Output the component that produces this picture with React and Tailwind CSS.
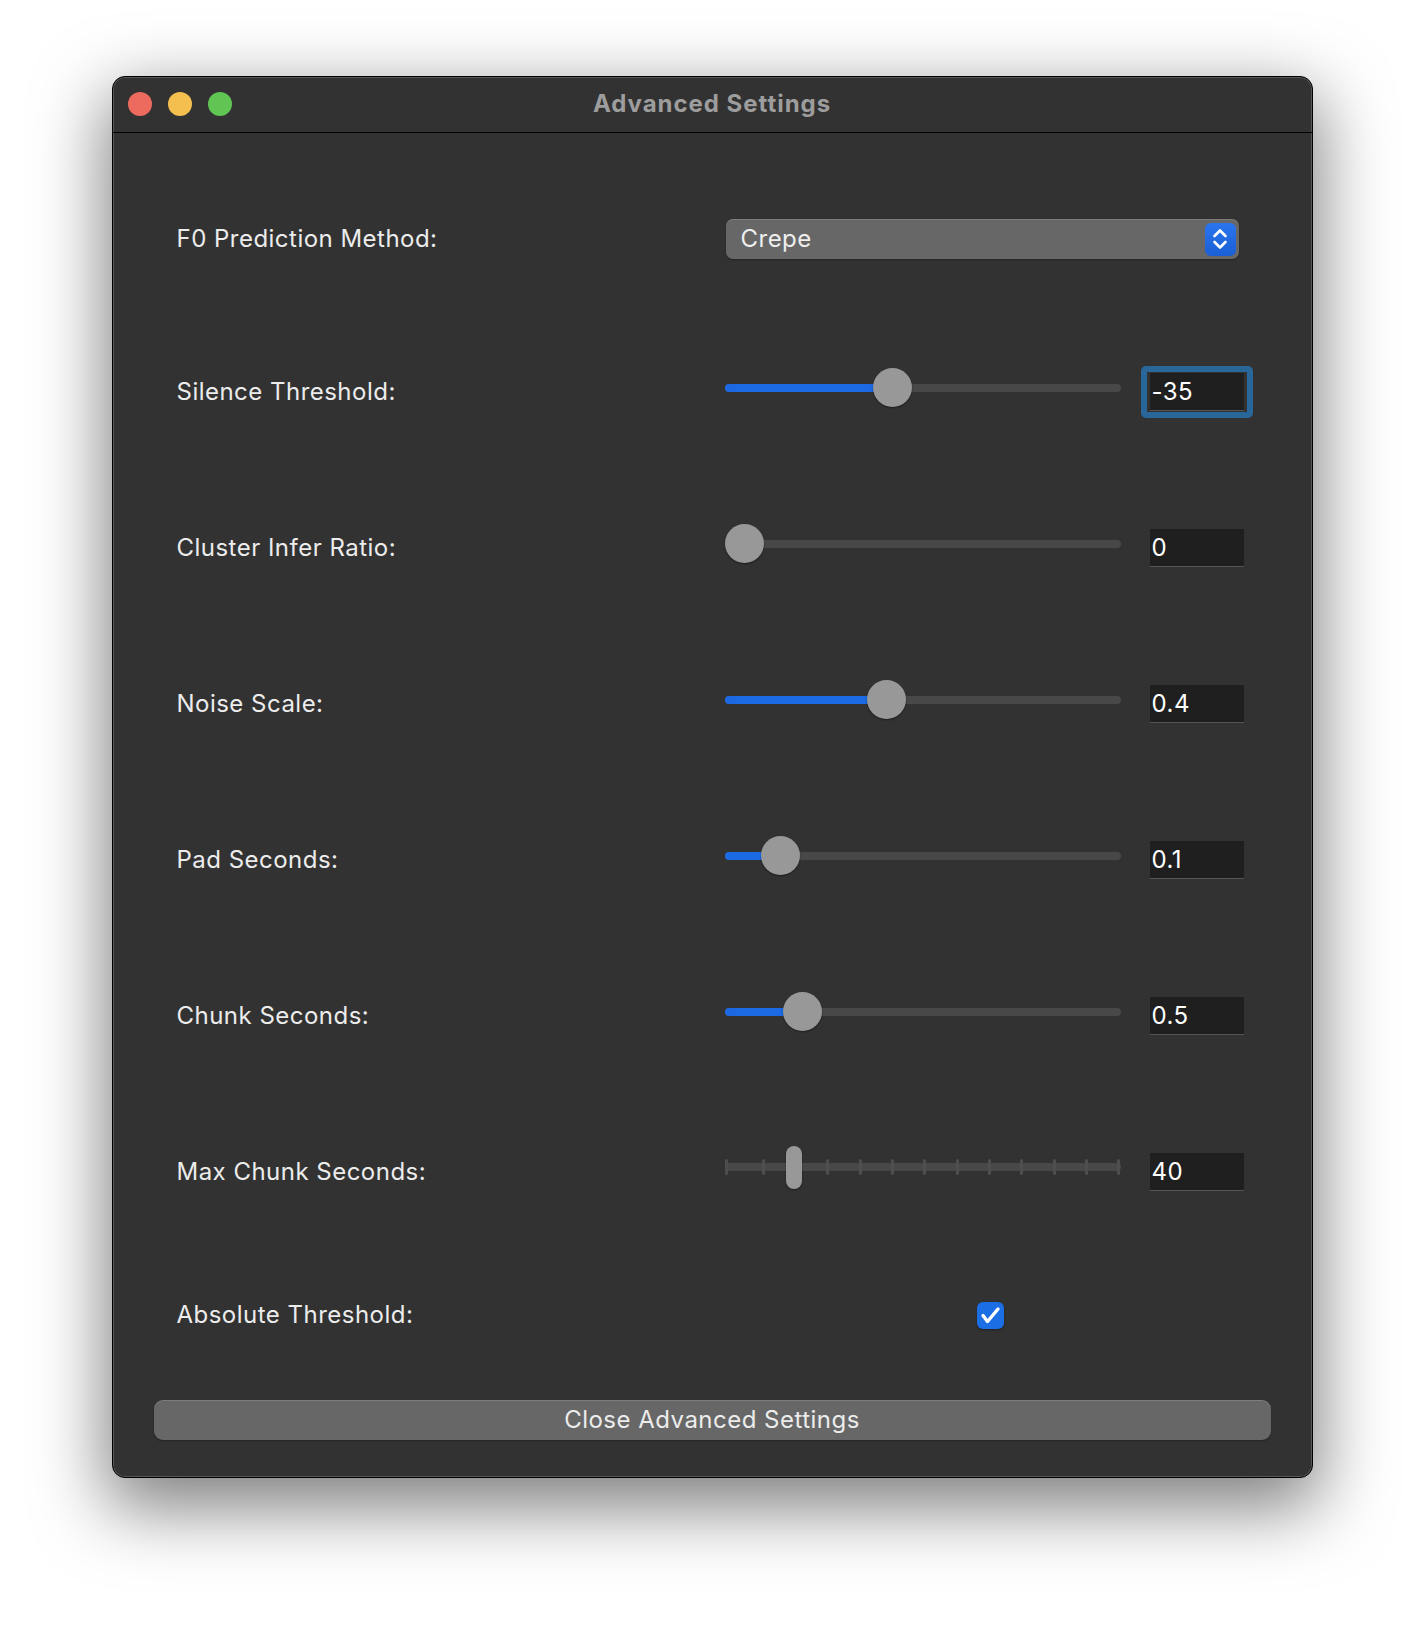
import React from "react";

const font = { fontFamily: "Inter, 'Liberation Sans', sans-serif" };

const sliders = [
  { label: "Silence Threshold:", value: "-35", pos: 168, focused: true },
  { label: "Cluster Infer Ratio:", value: "0", pos: 19.5 },
  { label: "Noise Scale:", value: "0.4", pos: 162 },
  { label: "Pad Seconds:", value: "0.1", pos: 56 },
  { label: "Chunk Seconds:", value: "0.5", pos: 78 },
];

function Slider({ pos }) {
  return (
    <div className="relative flex h-[39px] w-[396px] shrink-0 items-center mb-[9px]">
      <div className="h-[8px] w-full rounded-full bg-[#484848]" />
      {pos > 22 && (
        <div className="absolute left-0 h-[8px] rounded-full bg-[#1b69e3]" style={{ width: pos }} />
      )}
      <div
        className="absolute top-0 h-[39px] w-[39px] rounded-full bg-[#989898] shadow-[0_1px_2px_rgba(0,0,0,0.4)]"
        style={{ left: pos - 19.5 }}
      />
    </div>
  );
}

function Field({ value, focused }) {
  const box = (
    <div className="flex h-[38px] w-[94px] items-center border-b border-[#555] bg-[#1f1f1f] pl-[2px] text-[24px] tracking-[0.02em] text-white">
      {value}
    </div>
  );
  if (!focused) return <div className="ml-[29px] shrink-0">{box}</div>;
  return (
    <div className="ml-[20px] shrink-0 rounded-[5px] border-[6px] border-[#29679a] px-[3px] py-[1px]">
      {box}
    </div>
  );
}

function Row({ label, children, className = "" }) {
  return (
    <div className={"flex h-[56px] items-center " + className}>
      <div className="w-[548px] shrink-0 text-[24px] tracking-[0.02em] text-[#ececec]">{label}</div>
      {children}
    </div>
  );
}

export default function App() {
  return (
    <div className="flex min-h-[1626px] justify-center bg-white pt-[76px]" style={font}>
      <div className="flex h-[1402px] w-[1201px] flex-col overflow-hidden rounded-[13px] border border-black bg-[#323232] shadow-[0_24px_70px_6px_rgba(0,0,0,0.5),inset_0_0_0_1px_rgba(255,255,255,0.18)]">
        {/* title bar */}
        <div className="relative flex h-[56px] items-center border-b border-black pb-[2px] pl-[15px]">
          <div className="flex gap-[16px]">
            <div className="h-[24px] w-[24px] rounded-full bg-[#ec6a5e]" />
            <div className="h-[24px] w-[24px] rounded-full bg-[#f4bf4f]" />
            <div className="h-[24px] w-[24px] rounded-full bg-[#61c554]" />
          </div>
          <div className="absolute inset-x-0 top-[9px] text-center text-[24px] font-bold tracking-[0.04em] text-[#9d9d9d]">
            Advanced Settings
          </div>
        </div>

        <div className="flex flex-col pl-[64px] pt-[78px]">
          <Row label="F0 Prediction Method:">
            <div className="ml-[1px] flex h-[40px] w-[513px] shrink-0 items-center justify-between rounded-[7px] bg-[#676767] pl-[15px] pr-[3px] shadow-[inset_0_1px_0_rgba(255,255,255,0.15),0_1px_2px_rgba(0,0,0,0.3)]">
              <span className="text-[24px] tracking-[0.02em] text-[#eee]">Crepe</span>
              <div className="flex h-[33px] w-[31px] items-center justify-center rounded-[6px] bg-gradient-to-b from-[#2a75ee] to-[#1a5fd6]">
                <svg width="18" height="24" viewBox="0 0 18 24" fill="none" stroke="white" strokeWidth="2.6" strokeLinecap="round" strokeLinejoin="round">
                  <path d="M3.5 9 L9 3.5 L14.5 9" />
                  <path d="M3.5 15 L9 20.5 L14.5 15" />
                </svg>
              </div>
            </div>
          </Row>

          {sliders.map((s, i) => (
            <Row key={s.label} label={s.label} className={i === 0 ? "mt-[97px]" : "mt-[100px]"}>
              <Slider pos={s.pos} />
              <Field value={s.value} focused={s.focused} />
            </Row>
          ))}

          <Row label="Max Chunk Seconds:" className="mt-[100px]">
            <div className="relative flex h-[43px] w-[396px] shrink-0 items-center mb-[10px]">
              <div className="absolute inset-x-0 h-[8px] rounded-full bg-[#484848]" />
              <div className="relative flex w-full items-center">
                <div className="h-[16px] w-[3px] rounded-full bg-[#4e4e4e]" />
                <div className="ml-[34px] flex flex-1 justify-between">
                  {Array.from({ length: 12 }).map((_, i) => (
                    <div key={i} className="h-[16px] w-[3px] rounded-full bg-[#4e4e4e]" />
                  ))}
                </div>
              </div>
              <div className="absolute left-[61px] top-0 h-[43px] w-[16px] rounded-full bg-[#989898] shadow-[0_1px_2px_rgba(0,0,0,0.4)]" />
            </div>
            <Field value="40" />
          </Row>

          <Row label="Absolute Threshold:" className="mt-[87px]">
            <div className="ml-[252px] flex h-[27px] w-[27px] shrink-0 items-center justify-center rounded-[6px] bg-[#1b6ee4] shadow-[0_1px_2px_rgba(0,0,0,0.4)]">
              <svg width="27" height="27" viewBox="0 0 27 27" fill="none" stroke="white" strokeWidth="3.4" strokeLinecap="round" strokeLinejoin="round">
                <path d="M6 13.5 L10.5 19.5 L21 7" />
              </svg>
            </div>
          </Row>
        </div>

        <div className="px-[41px] pt-[57px]">
          <div className="flex h-[40px] items-center justify-center rounded-[9px] bg-[#676767] text-[24px] tracking-[0.02em] text-[#ececec] shadow-[inset_0_1px_0_rgba(255,255,255,0.15),0_1px_2px_rgba(0,0,0,0.3)]">
            Close Advanced Settings
          </div>
        </div>
      </div>
    </div>
  );
}
